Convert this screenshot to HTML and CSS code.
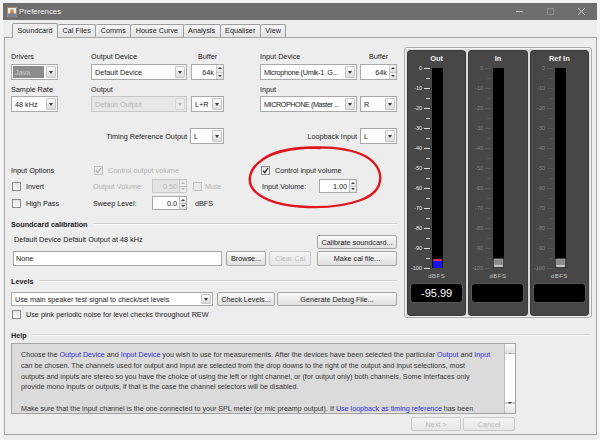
FILE: index.html
```html
<!DOCTYPE html>
<html>
<head>
<meta charset="utf-8">
<title>Preferences</title>
<link rel="stylesheet" href="styles.css">
</head>
<body>
<div class="window">
  <div class="titlebar">
    <svg class="app-icon" width="10" height="10" viewBox="0 0 10 10"><rect x="0.5" y="0.5" width="9" height="9" fill="#e4ecf2" stroke="#b5875a"/><rect x="1" y="6.5" width="8" height="3" fill="#5f87bd"/><circle cx="5" cy="4" r="1.8" fill="#e0893a"/><rect x="3.3" y="5.2" width="3.4" height="2.5" fill="#c9702c"/></svg>
    <span class="title">Preferences</span>
    <div class="winctl">
      <span class="wbtn"><svg width="9" height="9" viewBox="0 0 9 9"><path d="M1 4.5h7" stroke="#c4c4c4" stroke-width="1"/></svg></span>
      <span class="wbtn"><svg width="9" height="9" viewBox="0 0 9 9"><rect x="1.5" y="1.5" width="6" height="6" fill="none" stroke="#8c8c8c"/></svg></span>
      <span class="wbtn"><svg width="9" height="9" viewBox="0 0 9 9"><path d="M1 1l7 7M8 1l-7 7" stroke="#d2d2d2" stroke-width="1"/></svg></span>
    </div>
  </div>
  <div class="tabbar">
    <div class="tab active">Soundcard</div>
    <div class="tab">Cal Files</div>
    <div class="tab">Comms</div>
    <div class="tab">House Curve</div>
    <div class="tab">Analysis</div>
    <div class="tab">Equaliser</div>
    <div class="tab">View</div>
  </div>
  <div class="panel">
    <div class="top">
      <div class="form">
        <div class="row r1l">
          <span class="c1">Drivers</span>
          <span class="c2">Output Device</span>
          <span class="c3 ctr">Buffer</span>
          <span class="c4">Input Device</span>
          <span class="c5 ctr">Buffer</span>
        </div>
        <div class="row r1c">
          <div class="combo c1"><span class="v sel">Java</span><span class="a"></span></div>
          <div class="combo c2"><span class="v">Default Device</span><span class="a"></span></div>
          <div class="spin c3"><span class="v">64k</span><span class="b"><i class="up"></i><i class="dn"></i></span></div>
          <div class="combo c4"><span class="v tight">Microphone (Umik-1&nbsp; G...</span><span class="a"></span></div>
          <div class="spin c5"><span class="v">64k</span><span class="b"><i class="up"></i><i class="dn"></i></span></div>
        </div>
        <div class="row r2l">
          <span class="c1">Sample Rate</span>
          <span class="c2">Output</span>
          <span class="c3"></span>
          <span class="c4">Input</span>
        </div>
        <div class="row r2c">
          <div class="combo c1"><span class="v">48 kHz</span><span class="a"></span></div>
          <div class="combo c2 dis"><span class="v">Default Output</span><span class="a"></span></div>
          <div class="combo c3"><span class="v">L+R</span><span class="a"></span></div>
          <div class="combo c4"><span class="v tighter">MICROPHONE (Master ...</span><span class="a"></span></div>
          <div class="combo c5"><span class="v">R</span><span class="a"></span></div>
        </div>
        <div class="row rt">
          <span class="tl1">Timing Reference Output</span>
          <div class="combo c3t"><span class="v">L</span><span class="a"></span></div>
          <span class="tl2">Loopback Input</span>
          <div class="combo c5t"><span class="v">L</span><span class="a"></span></div>
        </div>
        <div class="row ro">
          <div class="ca"><span>Input Options</span></div>
          <div class="cbcol">
            <span class="cb dis ml3"><svg width="7" height="7" viewBox="0 0 7 7"><path d="M1 3.6l1.8 2L6 1" fill="none" stroke="#b3b3b3" stroke-width="1.3"/></svg></span>
            <span class="dt ml5">Control output volume</span>
          </div>
          <div class="cc">
            <span class="cb ml1"><svg width="7" height="7" viewBox="0 0 7 7"><path d="M1 3.6l1.8 2L6 1" fill="none" stroke="#222" stroke-width="1.3"/></svg></span>
            <span class="ml5">Control input volume</span>
          </div>
        </div>
        <div class="row ri">
          <div class="ca"><span class="cb ml1"></span><span class="ml5">Invert</span></div>
          <div class="cbcol">
            <span class="dt ovl">Output Volume:</span>
            <div class="spin dis sw35"><span class="v">0.50</span><span class="b"><i class="up"></i><i class="dn"></i></span></div>
            <span class="cb dis ml6"></span><span class="dt ml3">Mute</span>
          </div>
          <div class="cc">
            <span class="ivl">Input Volume:</span>
            <div class="spin sw38"><span class="v">1.00</span><span class="b"><i class="up"></i><i class="dn"></i></span></div>
          </div>
        </div>
        <div class="row rh">
          <div class="ca"><span class="cb ml1"></span><span class="ml5">High Pass</span></div>
          <div class="cbcol">
            <span class="ovl">Sweep Level:</span>
            <div class="spin sw35"><span class="v">0.0</span><span class="b"><i class="up"></i><i class="dn"></i></span></div>
            <span class="ml8">dBFS</span>
          </div>
        </div>
        <div class="sec sec-cal">Soundcard calibration</div>
        <div class="row rc1">
          <span class="ml3 cal-note">Default Device Default Output at 48 kHz</span>
          <span class="btn calbtn">Calibrate soundcard...</span>
        </div>
        <div class="row rc2">
          <span class="field calfield">None</span>
          <span class="btn browse">Browse...</span>
          <span class="btn dis clearcal">Clear Cal</span>
          <span class="btn makecal">Make cal file...</span>
        </div>
        <div class="sec sec-lev">Levels</div>
        <div class="row rl">
          <div class="combo levcombo"><span class="v">Use main speaker test signal to check/set levels</span><span class="a"></span></div>
          <span class="btn checklev">Check Levels...</span>
          <span class="btn debug">Generate Debug File...</span>
        </div>
        <div class="row rp">
          <span class="cb ml1"></span><span class="ml5">Use pink periodic noise for level checks throughout REW</span>
        </div>
      </div>
      <div class="meters">
        <div class="mcol">
          <div class="mtitle">Out</div>
          <svg class="scale" width="57" height="207" viewBox="0 0 57 207">
            <g class="lbl bright">
              <text x="14" y="5">0</text><text x="14" y="25">-10</text><text x="14" y="45">-20</text><text x="14" y="65">-30</text><text x="14" y="85">-40</text><text x="14" y="105">-50</text><text x="14" y="125">-60</text><text x="14" y="145">-70</text><text x="14" y="165">-80</text><text x="14" y="185">-90</text><text x="14" y="205">-100</text>
            </g>
            <path d="M16 3.5h6M18 13.5h4M16 23.5h6M18 33.5h4M16 43.5h6M18 53.5h4M16 63.5h6M18 73.5h4M16 83.5h6M18 93.5h4M16 103.5h6M18 113.5h4M16 123.5h6M18 133.5h4M16 143.5h6M18 153.5h4M16 163.5h6M18 173.5h4M16 183.5h6M18 193.5h4M16 203.5h6" stroke="#dcdcdc" stroke-width="1"/>
            <rect x="24" y="3" width="11" height="200" fill="#000"/>
            <rect x="25" y="196" width="9" height="7" fill="#1414f0"/>
            <rect x="25" y="194" width="9" height="2" fill="#d0306a"/>
          </svg>
          <div class="dbfs">dBFS</div>
          <div class="readout">-95.99</div>
        </div>
        <div class="mcol">
          <div class="mtitle">In</div>
          <svg class="scale" width="57" height="207" viewBox="0 0 57 207">
            <g class="lbl dim">
              <text x="14" y="5">0</text><text x="14" y="25">-10</text><text x="14" y="45">-20</text><text x="14" y="65">-30</text><text x="14" y="85">-40</text><text x="14" y="105">-50</text><text x="14" y="125">-60</text><text x="14" y="145">-70</text><text x="14" y="165">-80</text><text x="14" y="185">-90</text><text x="14" y="205">-100</text>
            </g>
            <path d="M16 3.5h6M18 13.5h4M16 23.5h6M18 33.5h4M16 43.5h6M18 53.5h4M16 63.5h6M18 73.5h4M16 83.5h6M18 93.5h4M16 103.5h6M18 113.5h4M16 123.5h6M18 133.5h4M16 143.5h6M18 153.5h4M16 163.5h6M18 173.5h4M16 183.5h6M18 193.5h4M16 203.5h6" stroke="#5a5a5a" stroke-width="1"/>
            <rect x="24" y="3" width="11" height="200" fill="#000"/>
            <rect x="25" y="194" width="9" height="8" fill="#8a8a8a" stroke="#a8a8a8" stroke-width="0.8"/>
            <rect x="25.5" y="200" width="8" height="1.6" fill="#d2d2d2"/>
          </svg>
          <div class="dbfs">dBFS</div>
          <div class="readout"></div>
        </div>
        <div class="mcol">
          <div class="mtitle">Ref In</div>
          <svg class="scale" width="57" height="207" viewBox="0 0 57 207">
            <g class="lbl dim">
              <text x="14" y="5">0</text><text x="14" y="25">-10</text><text x="14" y="45">-20</text><text x="14" y="65">-30</text><text x="14" y="85">-40</text><text x="14" y="105">-50</text><text x="14" y="125">-60</text><text x="14" y="145">-70</text><text x="14" y="165">-80</text><text x="14" y="185">-90</text><text x="14" y="205">-100</text>
            </g>
            <path d="M16 3.5h6M18 13.5h4M16 23.5h6M18 33.5h4M16 43.5h6M18 53.5h4M16 63.5h6M18 73.5h4M16 83.5h6M18 93.5h4M16 103.5h6M18 113.5h4M16 123.5h6M18 133.5h4M16 143.5h6M18 153.5h4M16 163.5h6M18 173.5h4M16 183.5h6M18 193.5h4M16 203.5h6" stroke="#5a5a5a" stroke-width="1"/>
            <rect x="24" y="3" width="11" height="200" fill="#000"/>
            <rect x="25" y="194" width="9" height="8" fill="#8a8a8a" stroke="#a8a8a8" stroke-width="0.8"/>
            <rect x="25.5" y="200" width="8" height="1.6" fill="#d2d2d2"/>
          </svg>
          <div class="dbfs">dBFS</div>
          <div class="readout"></div>
        </div>
      </div>
    </div>
    <div class="helpsec">
      <div class="sec hsec">Help</div>
      <div class="helpbox">
        <div class="helptext">
          <p>Choose the <a>Output Device</a> and <a>Input Device</a> you wish to use for measurements. After the devices have been selected the particular <a>Output</a> and <a>Input</a><br>can be chosen. The channels used for output and input are selected from the drop downs to the right of the output and input selections, most<br>outputs and inputs are stereo so you have the choice of using the left or right channel, or (for output only) both channels. Some interfaces only<br>provide mono inputs or outputs, if that is the case the channel selectors will be disabled.</p>
          <p>Make sure that the input channel is the one connected to your SPL meter (or mic preamp output). If <a>Use loopback as timing reference</a> has been</p>
        </div>
        <div class="sbar">
          <span class="sb-btn"><i class="up"></i></span>
          <span class="sb-thumb"></span>
          <span class="sb-track"></span>
          <span class="sb-btn"><i class="dn"></i></span>
        </div>
      </div>
      <div class="navrow">
        <span class="btn dis nextb">Next &gt;</span>
        <span class="btn dis cancelb">Cancel</span>
      </div>
    </div>
  </div>
</div>
<svg class="annot" width="600" height="440" viewBox="0 0 600 440"><path d="M262 160 C280 145 340 143 365 156 C385 167 387 190 361 200 C331 211 281 209 261 196 C243 185 246 165 275 153 C290 148 305 147 320 148" fill="none" stroke="#e0161e" stroke-width="2.4" stroke-linecap="round"/></svg>
</body>
</html>
```

FILE: styles.css
```css
* { box-sizing: border-box; }
html, body { margin: 0; padding: 0; }
body {
  width: 600px; height: 440px; overflow: hidden; position: relative;
  background: #f4f4f4;
  font-family: "Liberation Sans", Arial, sans-serif;
  font-size: 7.25px; color: #222;
}
p { margin: 0; }
.window {
  margin: 3px 0 0 3px; width: 594px; height: 437px;
  background: #ededed; display: flex; flex-direction: column;
}
.titlebar {
  height: 17px; flex: none; background: #6e6e6e; color: #f2f2f2;
  display: flex; align-items: center; padding-left: 4px;
}
.app-icon { display: block; margin-right: 2px; }
.title { font-size: 7.8px; }
.winctl { margin-left: auto; display: flex; height: 100%; }
.wbtn { width: 31px; display: flex; align-items: center; justify-content: center; }
.wbtn svg { display: block; }

.tabbar {
  height: 17px; flex: none; display: flex; align-items: flex-end;
  padding-left: 9px; position: relative; z-index: 1;
}
.tab {
  height: 13px; line-height: 12px; padding: 0 4.5px; color: #222;
  border: 1px solid #9d9d9d; border-bottom: none; border-left: none;
  border-radius: 2px 2px 0 0;
  background: linear-gradient(#f6f6f6, #e2e2e2);
  white-space: nowrap;
}
.tab.active {
  height: 15px; line-height: 14px; margin-bottom: -1px;
  border-left: 1px solid #9d9d9d; background: #ededed;
}
.panel {
  height: 398px; width: 593px; flex: none; margin-left: 1px;
  border: 1px solid #a5a5a5; background: #ededed;
  display: flex; flex-direction: column;
}
.top { display: flex; height: 281px; flex: none; }
.form { width: 386px; margin-left: 6px; padding-top: 13px; flex: none; }

.row { display: flex; align-items: center; }
.row > * { flex: none; }
.r1l { height: 10px; }
.r1c { height: 16px; margin-top: 3px; }
.r2l { height: 10px; margin-top: 4px; }
.r2c { height: 16px; margin-top: 2px; }
.rt { height: 16px; margin-top: 16px; }
.ro { height: 12px; margin-top: 20px; }
.ri { height: 14px; margin-top: 3px; }
.rh { height: 14px; margin-top: 3px; }
.sec-cal { height: 10px; margin-top: 9px; }
.rc1 { height: 14px; margin-top: 6px; align-items: flex-start; }
.rc2 { height: 15px; margin-top: 2px; }
.sec-lev { height: 10px; margin-top: 10px; }
.rl { height: 14px; margin-top: 6px; }
.rp { height: 10px; margin-top: 3px; }

.c1 { width: 47px; }
.c2 { width: 96px; margin-left: 33px; }
.c3 { width: 33px; margin-left: 4px; }
.c4 { width: 97px; margin-left: 36px; }
.c5 { width: 37px; margin-left: 3px; }
.ctr { text-align: center; }
.tl1 { width: 176px; text-align: right; }
.c3t { width: 34px; margin-left: 3px; }
.tl2 { width: 133px; text-align: right; }
.c5t { width: 37px; margin-left: 3px; }
.tight { letter-spacing: -0.3px; }
.tighter { letter-spacing: -0.45px; }

.ca { width: 80px; display: flex; align-items: center; height: 100%; }
.cbcol { width: 169px; display: flex; align-items: center; height: 100%; }
.cc { flex: 1 !important; display: flex; align-items: center; height: 100%; }
.ml1 { margin-left: 1px; }
.ml3 { margin-left: 3px; }
.ml5 { margin-left: 5px; }
.ml6 { margin-left: 6px; }
.ml8 { margin-left: 8px; }
.ovl { width: 59px; margin-left: 2px; flex: none; }
.ivl { width: 57px; margin-left: 2px; flex: none; }
.sw35 { width: 35px; }
.sw38 { width: 38px; }
.dt { color: #b3b3b3; }

/* combo */
.combo {
  display: flex; align-self: stretch; padding: 1px;
  border: 1px solid #a9a9a9; background: #fff;
}
.combo .v {
  flex: 1; min-width: 0; padding-left: 2px; white-space: nowrap; overflow: hidden;
  display: flex; align-items: center;
}
.combo .v.sel { background: #8c8c8c; color: #cfcfcf; margin-right: 2px; }
.combo .a {
  width: 10px; flex: none; border: 1px solid #c6c6c6; border-radius: 1px;
  background: linear-gradient(#fbfbfb, #dcdcdc);
  display: flex; align-items: center; justify-content: center;
}
.combo .a::after {
  content: ""; border-left: 2.5px solid transparent; border-right: 2.5px solid transparent;
  border-top: 3px solid #3c3c3c;
}
.combo.dis { background: #e7e7e7; border-color: #c8c8c8; color: #b6b6b6; }
.combo.dis .a { border-color: #d6d6d6; background: #ececec; }
.combo.dis .a::after { border-top-color: #b0b0b0; }

/* spinner */
.spin {
  display: flex; align-self: stretch;
  border: 1px solid #a9a9a9; background: #fff;
}
.spin .v { flex: 1; display: flex; align-items: center; justify-content: flex-end; padding-right: 2px; }
.spin .b { width: 7px; flex: none; display: flex; flex-direction: column; border-left: 1px solid #c6c6c6; }
.spin .b i {
  flex: 1; display: flex; align-items: center; justify-content: center;
  background: linear-gradient(#fafafa, #e0e0e0);
}
.spin .b i.up { border-bottom: 1px solid #c6c6c6; }
.spin .b i.up::after, .sb-btn i.up::after {
  content: ""; border-left: 2px solid transparent; border-right: 2px solid transparent;
  border-bottom: 2px solid #444;
}
.spin .b i.dn::after, .sb-btn i.dn::after {
  content: ""; border-left: 2px solid transparent; border-right: 2px solid transparent;
  border-top: 2px solid #444;
}
.spin.dis { background: #e4e4e4; border-color: #c8c8c8; color: #b9b9b9; }
.spin.dis .b i { background: #ebebeb; }
.spin.dis .b i::after { border-top-color: #b5b5b5; border-bottom-color: #b5b5b5; }

/* checkbox */
.cb {
  width: 9px; height: 9px; flex: none;
  border: 1px solid #8d8d8d; background: linear-gradient(#e2e2e2, #fcfcfc);
  display: flex; align-items: center; justify-content: center;
}
.cb svg { display: block; }
.cb.dis { border-color: #c4c4c4; background: #e9e9e9; }

/* buttons & fields */
.btn {
  align-self: stretch; display: flex; align-items: center; justify-content: center;
  border: 1px solid #a6a6a6; border-radius: 2px; white-space: nowrap;
  background: linear-gradient(#f9f9f9, #dfdfdf);
}
.btn.dis { color: #bababa; border-color: #c9c9c9; background: linear-gradient(#f4f4f4, #e6e6e6); }
.field {
  align-self: stretch; display: flex; align-items: center; padding-left: 2px;
  border: 1px solid #a9a9a9; background: #fff;
}
.cal-note { line-height: 10px; }
.calbtn { width: 80px; margin-left: auto; }
.calfield { width: 209px; margin-left: 2px; }
.browse { width: 40px; margin-left: 4px; }
.clearcal { width: 42px; margin-left: 3px; }
.makecal { width: 80px; margin-left: 6px; }
.levcombo { width: 202px; }
.checklev { width: 58px; margin-left: 4px; }
.debug { width: 120px; margin-left: 2px; }

/* section header */
.sec { display: flex; align-items: center; font-weight: bold; color: #1b1b1b; }
.sec::after {
  content: ""; flex: 1; margin-left: 5px;
  border-top: 1px solid #cfcfcf; border-bottom: 1px solid #fafafa;
}

/* meters */
.meters {
  width: 188px; height: 271px; margin: 9px 0 0 7px; flex: none;
  display: flex; gap: 4px; padding: 3px 3px 2px;
  border: 1px solid #ababab; border-radius: 3px; background: #dadada;
  box-shadow: inset 0 0 0 1px #f6f6f6;
}
.mcol {
  flex: 1; background: #474747; border-radius: 3px;
  display: flex; flex-direction: column; align-items: center; padding-top: 2px;
  box-shadow: 0 0 0 1px #3c3c3c;
}
.mtitle { line-height: 12px; font-weight: bold; color: #f0f0f0; font-size: 7.5px; }
.scale { display: block; align-self: flex-start; }
.scale text { font-family: "Liberation Sans", Arial, sans-serif; font-size: 5.5px; text-anchor: end; }
.lbl.bright text { fill: #e8e8e8; }
.lbl.dim text { fill: #848484; }
.dbfs { font-size: 6px; line-height: 8px; color: #c4c4c4; letter-spacing: 0.5px; }
.readout {
  margin-top: 4px; width: 51px; height: 18px; border-radius: 3px;
  background: #000; color: #fff; font-size: 11px; line-height: 18px; text-align: center;
  box-shadow: 0 0 0 1px #555;
}

/* help */
.helpsec { margin-top: 11px; padding: 0 5px 0 6px; }
.hsec { height: 10px; }
.helpbox {
  margin-top: 3px; width: 505px; height: 71px; display: flex;
  border: 1px solid #a4a4a4; background: #dbdbdb;
}
.helptext {
  flex: 1; min-width: 0; padding: 6px 0 0 9px; line-height: 10.8px;
  color: #333; white-space: nowrap; overflow: hidden; font-size: 7.15px;
}
.helptext p + p { margin-top: 10.8px; }
.helptext a { color: #2b2be0; }
.sbar {
  width: 11px; flex: none; display: flex; flex-direction: column;
  border-left: 1px solid #bcbcbc; background: #f0f0f0;
}
.sb-btn {
  height: 10px; display: flex; align-items: center; justify-content: center;
  background: linear-gradient(#fafafa, #e2e2e2); border-bottom: 1px solid #c6c6c6;
}
.sb-btn:last-child { border-bottom: none; border-top: 1px solid #c6c6c6; }
.sb-thumb { height: 49px; background: #fff; border-bottom: 1px solid #cfcfcf; }
.sb-track { flex: 1; }
.navrow { display: flex; justify-content: flex-end; width: 505px; height: 14px; margin-top: 3px; padding-right: 1px; }
.nextb { width: 50px; }
.cancelb { width: 52px; margin-left: 2px; }

.annot { position: absolute; left: 0; top: 0; pointer-events: none; }
```
